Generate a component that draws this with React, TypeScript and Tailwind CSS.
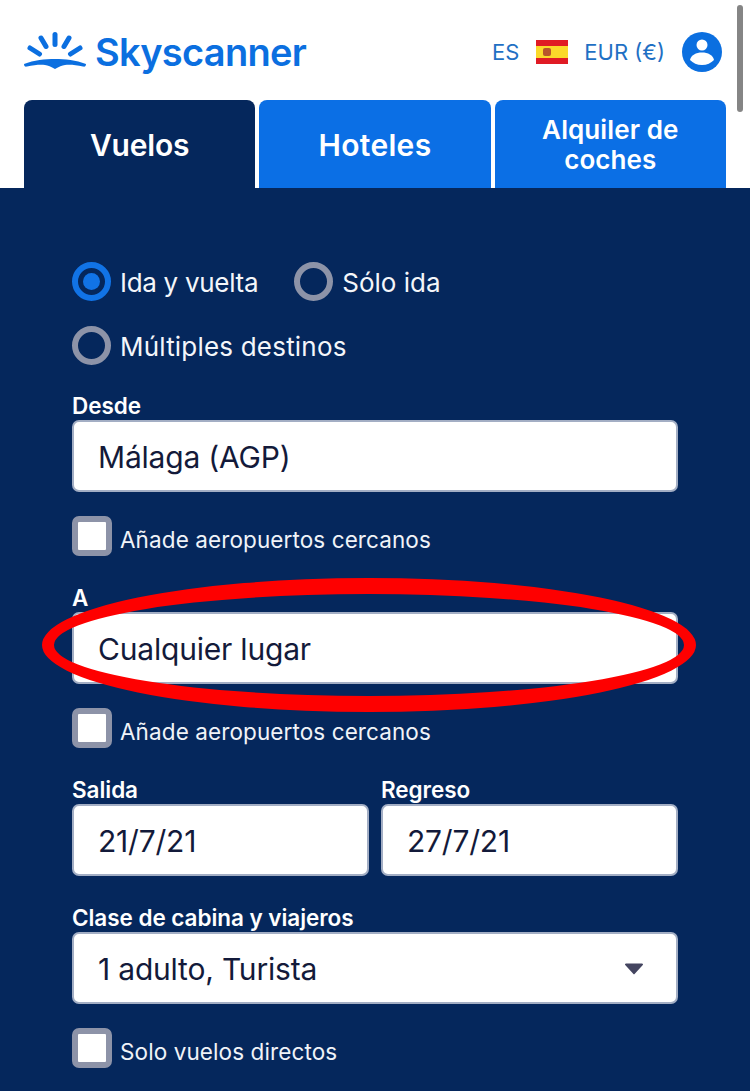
import React from "react";

const font = { fontFamily: '"Inter", "Noto Sans", sans-serif' };

function Radio({ label, checked, textClass }: { label: string; checked?: boolean; textClass: string }) {
  return (
    <div className="flex items-center gap-[9px]">
      {checked ? (
        <span className="flex h-[39px] w-[39px] items-center justify-center rounded-full border-[6px] border-[#1173e6]">
          <span className="h-[17px] w-[17px] rounded-full bg-[#1173e6]" />
        </span>
      ) : (
        <span className="h-[39px] w-[39px] rounded-full border-[6px] border-[#8d93a8]" />
      )}
      <span className={`mt-[2px] text-[26px] leading-[32px] text-[#f4f6fa] ${textClass}`}>{label}</span>
    </div>
  );
}

function Check({ label }: { label: string }) {
  return (
    <div className="mt-6 flex h-10 items-center gap-2">
      <span className="h-10 w-10 rounded-[7px] border-[6px] border-[#8d93a8] bg-white" />
      <span className="mt-[8px] text-[22.5px] leading-[28px] tracking-[0.1px] text-[#f0f3f8]">{label}</span>
    </div>
  );
}

function Field({ label, value, arrow, className }: { label: string; value: string; arrow?: boolean; className?: string }) {
  return (
    <div className={className}>
      <div className="h-[28px] text-[22.5px] font-semibold leading-[28px] tracking-[-0.05px] text-white">{label}</div>
      <div className="flex h-[72px] items-center justify-between rounded-[7px] border-2 border-[#a3aec4] bg-white pl-6 pr-[32px]">
        <span className="mt-[2px] text-[30px] leading-[36px] tracking-[-0.2px] text-[#131a3a]">{value}</span>
        {arrow && (
          <svg width="20" height="13" viewBox="0 0 20 13">
            <path d="M2 1.5h16a1 1 0 0 1 .8 1.6l-8 8.6a1 1 0 0 1-1.6 0l-8-8.6A1 1 0 0 1 2 1.5z" fill="#444560" />
          </svg>
        )}
      </div>
    </div>
  );
}

function Logo() {
  return (
    <svg width="62" height="42" viewBox="0 0 62 42" fill="none">
      <g stroke="#0b6fe0" strokeWidth="5" strokeLinecap="round">
        <path d="M31 3.500v10" />
        <path d="M17 7l5 8.500" />
        <path d="M45 7l-5 8.500" />
        <path d="M6 17l9.500 6" />
        <path d="M56 17l-9.500 6" />
      </g>
      <path
        d="M0 33c10-4 21-5 31-5s21 1 31 5c0 2-1 3-3 2.500-7-1.500-13-2-18-1.500-3 .3-6 2-10 4-4-2-7-3.700-10-4-5-.5-11 0-18 1.500-2 .5-3-.500-3-2.500z"
        fill="#0b6fe0"
      />
    </svg>
  );
}

function Tab({ active, children }: { active?: boolean; children: React.ReactNode }) {
  return (
    <div
      className={`flex h-full flex-1 items-center justify-center rounded-t-lg pt-[2px] text-center font-semibold text-white ${
        active ? "bg-[#05275c]" : "bg-[#0b6fe5]"
      }`}
    >
      {children}
    </div>
  );
}

export default function App() {
  return (
    <div className="relative h-[1091px] w-[750px] overflow-hidden bg-white" style={font}>
      {/* Header */}
      <header className="flex h-[100px] items-start justify-between pl-6 pr-7 pt-[30px]">
        <div className="flex items-center gap-[9px]">
          <Logo />
          <span className="text-[38px] font-semibold leading-[44px] tracking-[-0.7px] text-[#0b6fe0]">Skyscanner</span>
        </div>
        <div className="flex items-center text-[22px] leading-[44px] text-[#1f70c4]">
          <span>ES</span>
          <svg className="ml-[17px]" width="32" height="24" viewBox="0 0 32 24">
            <rect width="32" height="24" fill="#e01b24" />
            <rect y="6" width="32" height="12" fill="#fbd92a" />
            <rect x="7" y="8" width="8" height="8" rx="2" fill="#b8552b" />
          </svg>
          <span className="ml-4">EUR (€)</span>
          <svg className="ml-[17px]" width="40" height="40" viewBox="0 0 40 40">
            <circle cx="20" cy="20" r="20" fill="#0b6fe0" />
            <circle cx="20" cy="13" r="5.500" fill="white" />
            <path d="M8 28c1-5 6-7.500 12-7.500s11 2.500 12 7.500c-3 3-7 5-12 5s-9-2-12-5z" fill="white" />
          </svg>
        </div>
      </header>

      {/* Tabs */}
      <nav className="flex h-[88px] gap-1 pl-6 pr-6">
        <Tab active>
          <span className="text-[30px] tracking-[-0.2px]">Vuelos</span>
        </Tab>
        <Tab>
          <span className="text-[30px] tracking-[0.3px]">Hoteles</span>
        </Tab>
        <Tab>
          <span className="text-[26px] leading-[30px] tracking-[0.1px]">
            Alquiler de
            <br />
            coches
          </span>
        </Tab>
      </nav>

      {/* Search form */}
      <main className="h-[903px] bg-[#05275c] px-[72px] pt-[74px]">
        <div className="flex gap-[36px]">
          <Radio label="Ida y vuelta" checked textClass="tracking-[-0.3px]" />
          <Radio label="Sólo ida" textClass="tracking-[0px]" />
        </div>
        <div className="mt-[25px]">
          <Radio label="Múltiples destinos" textClass="tracking-[0.2px]" />
        </div>
        <Field className="mt-[27px]" label="Desde" value="Málaga (AGP)" />
        <Check label="Añade aeropuertos cercanos" />
        <Field className="mt-[28px]" label="A" value="Cualquier lugar" />
        <Check label="Añade aeropuertos cercanos" />
        <div className="mt-[28px] flex gap-3">
          <Field className="flex-1" label="Salida" value="21/7/21" />
          <Field className="flex-1" label="Regreso" value="27/7/21" />
        </div>
        <Field className="mt-[28px]" label="Clase de cabina y viajeros" value="1 adulto, Turista" arrow />
        <Check label="Solo vuelos directos" />
      </main>

      {/* Scrollbar */}
      <div className="absolute right-[7px] top-[5px] h-[107px] w-[6px] rounded-full bg-[#858585]" />

      {/* Red marker ellipse */}
      <svg className="absolute left-[40px] top-[575px]" width="660" height="140" viewBox="0 0 660 140">
        <path
          fillRule="evenodd"
          fill="#fe0000"
          d="M2 70a327 67 0 1 0 654 0a327 67 0 1 0-654 0zM14 70a315 51 0 1 0 630 0a315 51 0 1 0-630 0z"
        />
      </svg>
    </div>
  );
}
